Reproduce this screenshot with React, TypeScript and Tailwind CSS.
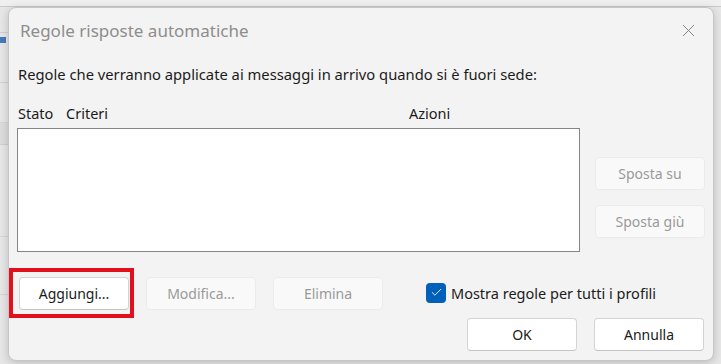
import { X, Check } from "lucide-react";

const font = { fontFamily: '"Noto Sans", "Open Sans", sans-serif' };

function Btn({ label, disabled, className = "" }: { label: string; disabled?: boolean; className?: string }) {
  return (
    <button
      className={
        "h-[33px] w-[110px] rounded-[4px] border text-[14px] " +
        (disabled
          ? "bg-[#f9f9f9] border-[#ebebeb] text-[#9a9a9a]"
          : "bg-white border-[#d4d4d4] border-b-[#c4c4c4] text-[#1b1b1b]") +
        " " +
        className
      }
    >
      {label}
    </button>
  );
}

export default function App() {
  return (
    <div className="w-[721px] h-[364px] bg-[#e6e6e6] overflow-hidden flex flex-col" style={font}>
      {/* app behind the dialog */}
      <div className="h-[7px] shrink-0 border-b border-[#c9c9c9] bg-[#efefef]" />
      <div className="flex flex-1">
        <div className="w-[8px] shrink-0 overflow-hidden flex flex-col text-[#6e6e6e] text-[15px] leading-[20px]">
          <div className="h-[26px] border-b border-[#cfcfcf]" />
          <div className="h-[6px] bg-[#4a78b8] w-[6px] mt-[4px]" />
          <div className="h-[40px] border-b border-[#cfcfcf]" />
          <div className="h-[40px] border-b border-[#d6d6d6]" />
          <div className="h-[22px] border-b border-[#cfcfcf] bg-[#dcdcdc]" />
          <div className="h-[42px]" />
          <div className="h-[50px] border-b border-[#d6d6d6]" />
          <div className="h-[36px]" />
          <div className="h-[22px] border-b border-[#d6d6d6]" />
          <div className="h-[48px]" />
        </div>

        {/* dialog */}
        <div className="w-[706px] h-[354px] bg-[#f3f3f3] rounded-[8px] border border-[#c6c6c6] shadow-[0_2px_8px_rgba(0,0,0,0.18)] flex flex-col text-[#1b1b1b]">
          <div className="h-[56px] flex items-start justify-between pl-[11px] pr-[14px] pt-[11px]">
            <span className="text-[17px] leading-[24px] text-[#8d8d8d]">Regole risposte automatiche</span>
            <X className="w-[21px] h-[21px] text-[#808080] mt-[1px]" strokeWidth={1.1} />
          </div>
          <div className="pl-[9px] text-[14.75px] leading-[20px]">
            Regole che verranno applicate ai messaggi in arrivo quando si è fuori sede:
          </div>
          <div className="mt-[19px] pl-[9px] flex text-[14.5px] leading-[20px]">
            <span className="w-[48px]">Stato</span>
            <span className="w-[343px]">Criteri</span>
            <span>Azioni</span>
          </div>
          <div className="mt-[5px] flex">
            <div className="ml-[8px] w-[563px] h-[124px] bg-white border border-[#858585]" />
            <div className="ml-[15px] pt-[29px] flex flex-col gap-[15px]">
              <Btn label="Sposta su" disabled />
              <Btn label="Sposta giù" disabled />
            </div>
          </div>
          <div className="mt-[25px] flex items-center">
            <div className="relative ml-[10px]">
              <Btn label="Aggiungi..." />
              <div className="absolute -left-[10px] -top-[9px] w-[125px] h-[50px] border-[4px] border-[#e2101c]" />
            </div>
            <Btn label="Modifica..." disabled className="ml-[17px]" />
            <Btn label="Elimina" disabled className="ml-[17px]" />
            <div className="ml-[43px] flex items-center gap-[5px] -mt-[2px]">
              <span className="w-[20px] h-[20px] rounded-[4px] bg-[#005fb8] flex items-center justify-center">
                <Check className="w-[13px] h-[13px] text-white" strokeWidth={1.6} />
              </span>
              <span className="text-[14.5px] leading-[20px]">Mostra regole per tutti i profili</span>
            </div>
          </div>
          <div className="mt-[8px] flex justify-end gap-[17px] pr-[9px]">
            <Btn label="OK" />
            <Btn label="Annulla" />
          </div>
        </div>
      </div>
    </div>
  );
}
